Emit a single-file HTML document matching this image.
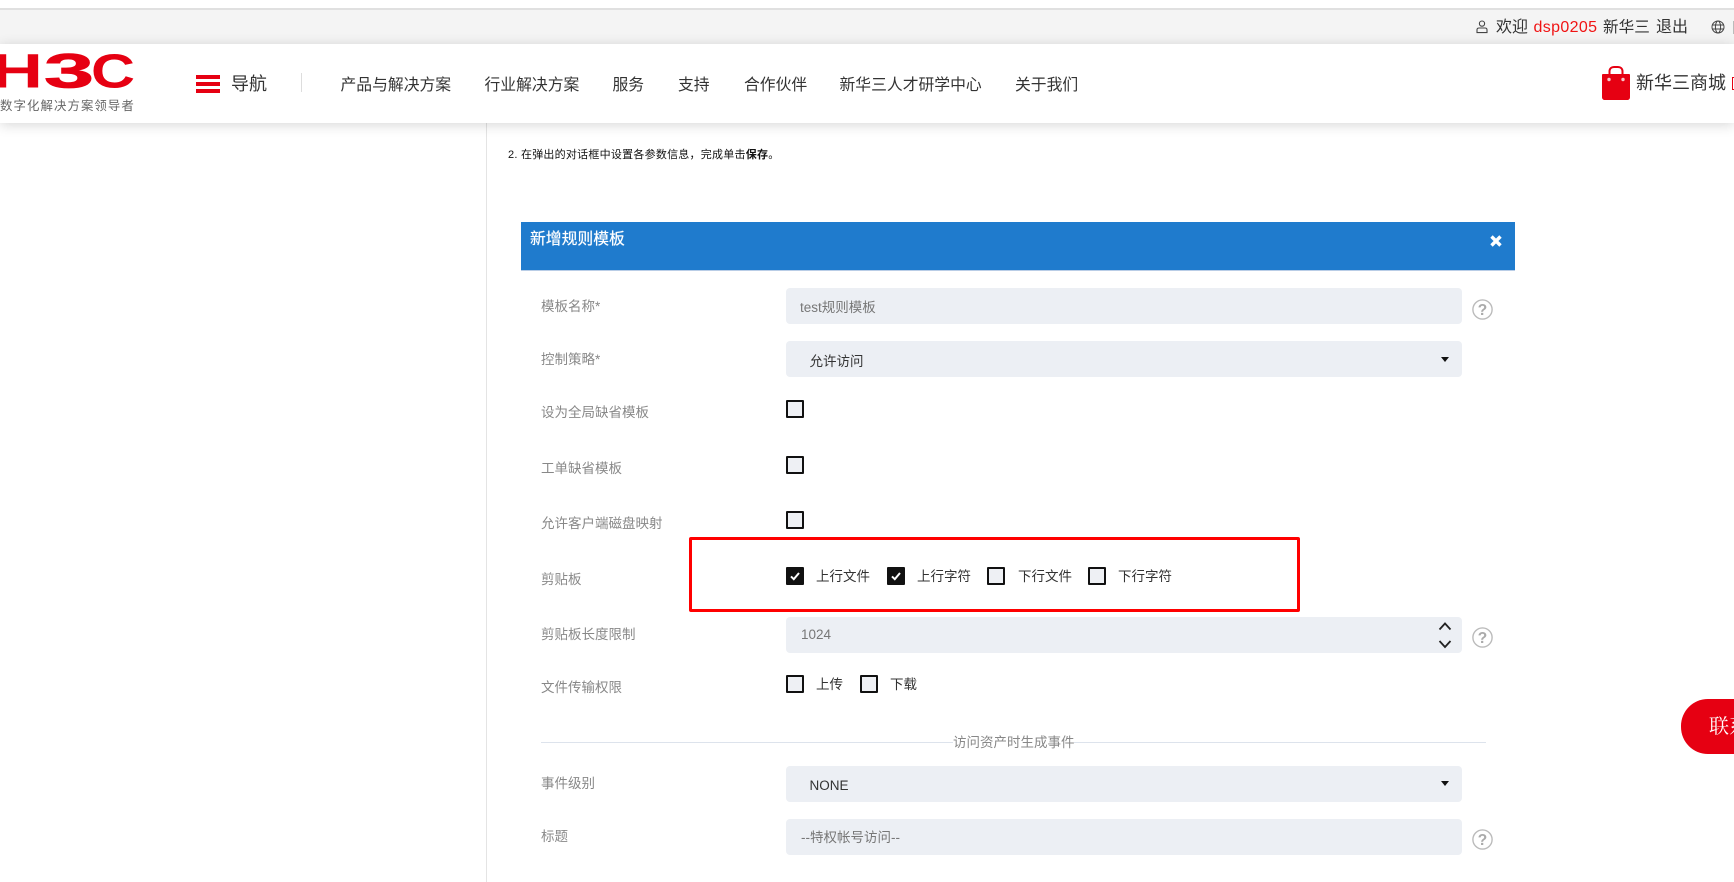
<!DOCTYPE html>
<html lang="zh"><head><meta charset="utf-8"><title>新增规则模板</title>
<style>
html,body{margin:0;padding:0;width:1734px;height:882px;overflow:hidden;background:#fff}
body{position:relative;font-family:"Liberation Sans","Noto Sans CJK SC",sans-serif;color:#333}
div,span,svg{position:absolute}
b{font-weight:700}
.t{white-space:nowrap;line-height:20px;height:20px}
.l{font-size:13.5px;color:#888;left:541px;filter:blur(.3px)}
.c{font-size:13.5px;color:#333;filter:blur(.25px)}
.n{font-size:15.8px;color:#333;top:76px}
.tb{font-size:16px;color:#333;top:18px}
.i{left:786px;width:676px;height:36px;background:#eceff4;border-radius:4px}
.v{font-size:13.5px;color:#777;left:800px;filter:blur(.25px)}
.s{font-size:13.5px;color:#333;left:809.5px;filter:blur(.25px)}
.cb{width:14px;height:14px;border:2px solid #111;background:#eef0f4;border-radius:1px}
.on{background:#111}
.on svg{left:1px;top:1px}
.ar{left:1441px;width:0;height:0;border-left:4.5px solid transparent;border-right:4.5px solid transparent;border-top:5px solid #111}
.q{left:1472px;width:21px;height:21px}
.q text{font:700 15.5px "Liberation Sans",sans-serif;fill:#aaa}
</style></head><body>
<div style="left:0;top:8px;width:1734px;height:2px;background:#e0e0e0"></div>
<div style="left:0;top:10px;width:1734px;height:34px;background:#f4f4f4"></div>
<div style="left:0;top:44px;width:1734px;height:79px;background:#fff;box-shadow:0 2px 12px rgba(0,0,0,.16);z-index:2"></div>
<div style="left:486px;top:123px;width:1px;height:759px;background:#e4e4e4"></div>

<div style="left:0;top:0;width:1734px;height:123px;z-index:3">
<svg style="left:1476px;top:20px" width="12" height="14" viewBox="0 0 12 14" fill="none" stroke="#444" stroke-width="1.1"><circle cx="6" cy="3.6" r="2.6"/><path d="M1 12.6V9.8C1 8.6 2 8 3 8H9C10 8 11 8.6 11 9.8V12.6Z"/></svg>
<span class="t tb" style="left:1496px">欢迎</span>
<span class="t tb" style="left:1533.5px;color:#f01414;letter-spacing:.35px">dsp0205</span>
<span class="t tb" style="left:1603px;font-size:15.6px">新华三</span>
<span class="t tb" style="left:1656px">退出</span>
<svg style="left:1711px;top:20px" width="14" height="14" viewBox="0 0 14 14" fill="none" stroke="#444" stroke-width="1"><circle cx="7" cy="7" r="6"/><ellipse cx="7" cy="7" rx="2.6" ry="6"/><path d="M1 5H13M1 9H13"/></svg>
<div style="left:1733px;top:21px;width:1px;height:13px;background:#bbb"></div>

<svg style="left:0;top:44px" width="140" height="50" viewBox="0 0 140 50">
<text x="-9" y="43.6" font-family="Liberation Sans" font-weight="700" font-size="48" fill="#e60012" textLength="52" lengthAdjust="spacingAndGlyphs">H</text>
<text x="44" y="43.6" font-family="Liberation Sans" font-weight="700" font-size="48" fill="#e60012" stroke="#e60012" stroke-width=".8" textLength="50" lengthAdjust="spacingAndGlyphs">3</text>
<text x="91" y="43.6" font-family="Liberation Sans" font-weight="700" font-size="48" fill="#e60012" textLength="44" lengthAdjust="spacingAndGlyphs">C</text>
</svg>
<span class="t" style="left:0;top:96px;font-size:12.4px;color:#666;letter-spacing:1.1px">数字化解决方案领导者</span>

<div style="left:196px;top:75px;width:24px;height:4px;background:#e60012"></div>
<div style="left:196px;top:82px;width:24px;height:4px;background:#e60012"></div>
<div style="left:196px;top:88.5px;width:24px;height:4px;background:#e60012"></div>
<span class="t" style="left:231px;top:74px;font-size:18px;color:#333">导航</span>
<div style="left:301px;top:73px;width:1px;height:19px;background:#ddd"></div>
<span class="t n" style="left:340.5px">产品与解决方案</span>
<span class="t n" style="left:484.5px">行业解决方案</span>
<span class="t n" style="left:612.5px">服务</span>
<span class="t n" style="left:678px">支持</span>
<span class="t n" style="left:744px">合作伙伴</span>
<span class="t n" style="left:839.5px">新华三人才研学中心</span>
<span class="t n" style="left:1015px">关于我们</span>

<svg style="left:1602px;top:66px" width="28" height="35" viewBox="0 0 28 35">
<path d="M7.5 10V5.5C7.5 2.5 9.5 1 12 1H16C18.5 1 20.5 2.5 20.5 5.5V10" fill="none" stroke="#e60012" stroke-width="2"/>
<path d="M1 8H27C27.6 8 28 8.4 28 9V31C28 33 26.8 34 25 34H3C1.2 34 0 33 0 31V9C0 8.4.4 8 1 8Z" fill="#e60012"/>
<circle cx="7" cy="13.5" r="1.7" fill="#f6c6ca"/><circle cx="21" cy="13.5" r="1.7" fill="#f6c6ca"/>
</svg>
<span class="t" style="left:1636px;top:73px;font-size:18px;color:#333">新华三商城</span>
<div style="left:1732px;top:77px;width:2px;height:13px;border:1px solid #e60012;box-sizing:border-box;border-right:0"></div>
</div>

<span class="t" style="left:508px;top:145px;font-size:11px;letter-spacing:.24px;color:#111">2. 在弹出的对话框中设置各参数信息，完成单击<b>保存</b>。</span>

<div style="left:521px;top:222px;width:994px;height:48px;background:#1f7bcd;border-bottom:1px solid #b9cde6"></div>
<span class="t" style="left:530px;top:230px;font-size:15.8px;color:#fff;text-shadow:0 0 .6px #fff">新增规则模板</span>
<svg style="left:1488.5px;top:234px" width="14" height="14" viewBox="0 0 14 14"><path d="M2.5 2.5L11.5 11.5M11.5 2.5L2.5 11.5" stroke="#fff" stroke-width="3.4" fill="none"/></svg>

<span class="t l" style="top:297px">模板名称*</span>
<div class="i" style="top:288px"></div>
<span class="t v" style="top:298px">test规则模板</span>
<svg class="q" style="top:298.5px" viewBox="0 0 21 21"><circle cx="10.5" cy="10.5" r="9.6" fill="none" stroke="#bbb" stroke-width="1.4"/><text x="10.5" y="16" text-anchor="middle">?</text></svg>

<span class="t l" style="top:350px">控制策略*</span>
<div class="i" style="top:341px"></div>
<span class="t s" style="top:352px">允许访问</span>
<div class="ar" style="top:356.5px"></div>

<span class="t l" style="top:403px">设为全局缺省模板</span>
<div class="cb" style="left:786px;top:400px"></div>
<span class="t l" style="top:459px">工单缺省模板</span>
<div class="cb" style="left:786px;top:456px"></div>
<span class="t l" style="top:514px">允许客户端磁盘映射</span>
<div class="cb" style="left:786px;top:511px"></div>

<div style="left:688.5px;top:537px;width:611px;height:74.5px;box-sizing:border-box;border:3px solid #f00;border-radius:2px"></div>
<span class="t l" style="top:570px">剪贴板</span>
<div class="cb on" style="left:786px;top:567px"><svg width="12" height="12" viewBox="0 0 12 12"><path d="M2 6.4L4.8 9.2L10 3" fill="none" stroke="#fff" stroke-width="2"/></svg></div>
<span class="t c" style="left:816px;top:567px">上行文件</span>
<div class="cb on" style="left:886.5px;top:567px"><svg width="12" height="12" viewBox="0 0 12 12"><path d="M2 6.4L4.8 9.2L10 3" fill="none" stroke="#fff" stroke-width="2"/></svg></div>
<span class="t c" style="left:917px;top:567px">上行字符</span>
<div class="cb" style="left:987px;top:567px"></div>
<span class="t c" style="left:1018px;top:567px">下行文件</span>
<div class="cb" style="left:1088px;top:567px"></div>
<span class="t c" style="left:1118px;top:567px">下行字符</span>

<span class="t l" style="top:625px">剪贴板长度限制</span>
<div class="i" style="top:617px"></div>
<span class="t v" style="top:625px;left:801px">1024</span>
<svg style="left:1438px;top:621px" width="14" height="28" viewBox="0 0 14 28" fill="none" stroke="#222" stroke-width="1.8"><path d="M1.5 8.5L7 2.5L12.5 8.5M1.5 20L7 26L12.5 20"/></svg>
<svg class="q" style="top:626.5px" viewBox="0 0 21 21"><circle cx="10.5" cy="10.5" r="9.6" fill="none" stroke="#bbb" stroke-width="1.4"/><text x="10.5" y="16" text-anchor="middle">?</text></svg>

<span class="t l" style="top:678px">文件传输权限</span>
<div class="cb" style="left:786px;top:675px"></div>
<span class="t c" style="left:816px;top:675px">上传</span>
<div class="cb" style="left:859.5px;top:675px"></div>
<span class="t c" style="left:890px;top:675px">下载</span>

<div style="left:541px;top:742px;width:945px;height:1px;background:#dde3ec"></div>
<span class="t" style="left:953px;top:733px;padding:0;font-size:13.5px;color:#888;background:#fff;width:121px;filter:blur(.25px)">访问资产时生成事件</span>

<span class="t l" style="top:774px">事件级别</span>
<div class="i" style="top:766px"></div>
<span class="t s" style="top:776px">NONE</span>
<div class="ar" style="top:780.5px"></div>

<span class="t l" style="top:827px">标题</span>
<div class="i" style="top:819px"></div>
<span class="t v" style="top:828px;left:801px">--特权帐号访问--</span>
<svg class="q" style="top:828.5px" viewBox="0 0 21 21"><circle cx="10.5" cy="10.5" r="9.6" fill="none" stroke="#bbb" stroke-width="1.4"/><text x="10.5" y="16" text-anchor="middle">?</text></svg>

<div style="left:1681px;top:699px;width:80px;height:55px;background:#e60012;border-radius:27px 0 0 27px;overflow:hidden;z-index:4">
<span class="t" style="left:28px;top:16px;line-height:24px;height:24px;font-size:20px;color:#fff;font-family:'Liberation Serif','Noto Serif CJK SC',serif">联系</span>
</div>
</body></html>
